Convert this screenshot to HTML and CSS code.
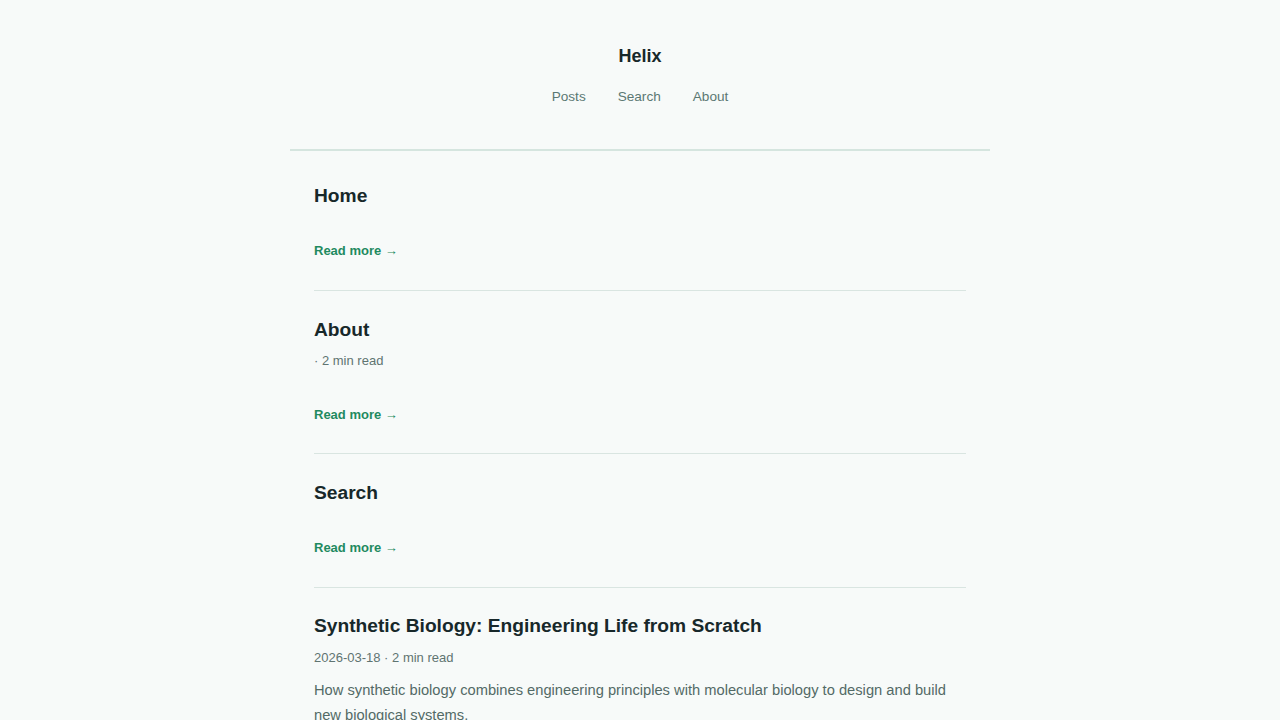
FILE: index.html
```html
<!DOCTYPE html>
<html lang="en">
<head>
<meta charset="utf-8">
<title>Helix</title>
<link rel="stylesheet" href="styles.css">
</head>
<body>
<div class="page">
  <header class="site-header">
    <div class="brand">Helix</div>
    <nav class="nav">
      <a href="#">Posts</a>
      <a href="#">Search</a>
      <a href="#">About</a>
    </nav>
  </header>
  <main class="posts">
    <article class="post">
      <h2 class="post-title">Home</h2>
      <a class="more" href="#">Read more →</a>
    </article>
    <article class="post">
      <h2 class="post-title">About</h2>
      <div class="meta">· 2 min read</div>
      <a class="more more-after-meta" href="#">Read more →</a>
    </article>
    <article class="post">
      <h2 class="post-title">Search</h2>
      <a class="more" href="#">Read more →</a>
    </article>
    <article class="post post-full">
      <h2 class="post-title">Synthetic Biology: Engineering Life from Scratch</h2>
      <div class="meta">2026-03-18 · 2 min read</div>
      <p class="excerpt">How synthetic biology combines engineering principles with molecular biology to design and build new biological systems.</p>
      <a class="more" href="#">Read more →</a>
    </article>
  </main>
</div>
</body>
</html>
```
FILE: styles.css
```css
html, body {
  margin: 0;
  padding: 0;
  background: #f7faf9;
}
body {
  font-family: "Liberation Sans", Arial, sans-serif;
  color: #1b2826;
}
.page {
  width: 700px;
  margin: 0 auto;
}
.site-header {
  display: flex;
  flex-direction: column;
  align-items: center;
  padding: 44px 0 43px;
  border-bottom: 2px solid #d5e5df;
}
.brand {
  font-size: 18px;
  font-weight: 700;
  line-height: 24px;
  color: #17282a;
}
.nav {
  display: flex;
  gap: 32px;
  margin-top: 20px;
}
.nav a {
  font-size: 13.6px;
  line-height: 18px;
  color: #5b7873;
  text-decoration: none;
}
.posts {
  padding: 6px 24px 0;
}
.post {
  display: flex;
  flex-direction: column;
  align-items: flex-start;
  padding: 26px 0 30px;
  border-bottom: 1px solid #d9e5e1;
}
.post-full {
  padding-top: 25px;
}
.post-title {
  margin: 0;
  font-size: 19.2px;
  line-height: 26px;
  font-weight: 700;
  color: #17282a;
}
.meta {
  margin-top: 9px;
  font-size: 13px;
  line-height: 18px;
  color: #5f7471;
}
.post-full .meta {
  margin-top: 10px;
}
.excerpt {
  margin: 11px 0 0;
  font-size: 14.7px;
  line-height: 25px;
  color: #536a66;
}
.more {
  margin-top: 33px;
  font-size: 13px;
  line-height: 18px;
  font-weight: 700;
  color: #1f8a60;
  text-decoration: none;
}
.more-after-meta {
  margin-top: 36px;
}
.post:has(.more-after-meta) {
  padding-bottom: 29px;
}
```
